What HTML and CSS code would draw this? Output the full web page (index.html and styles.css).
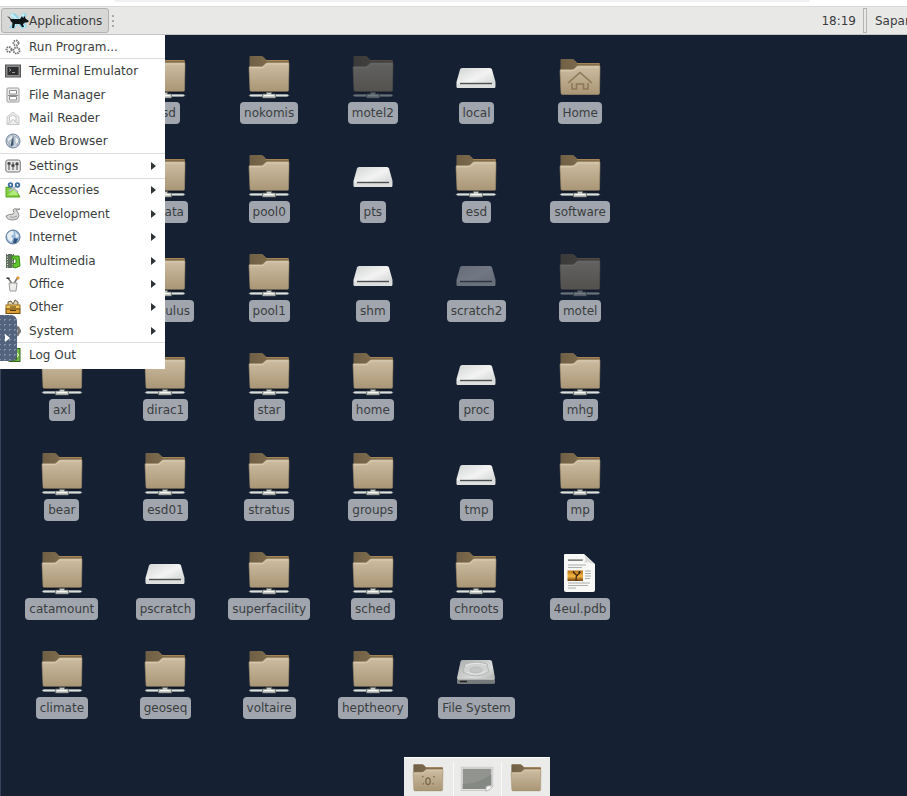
FILE: index.html
```html
<!DOCTYPE html>
<html lang="en">
<head>
<meta charset="utf-8">
<title>Desktop</title>
<link rel="stylesheet" href="styles.css">
</head>
<body>
<svg class="defs" width="0" height="0" aria-hidden="true">
  <defs>
    <linearGradient id="front" x1="0" y1="0" x2="0" y2="1"><stop offset="0" stop-color="#cdbda2"/><stop offset="1" stop-color="#a99675"/></linearGradient>
    <linearGradient id="back" x1="0" y1="0" x2="1" y2="0"><stop offset="0" stop-color="#6f5f45"/><stop offset=".5" stop-color="#7f6c4c"/><stop offset="1" stop-color="#8a6c45"/></linearGradient>
    <linearGradient id="metal" x1="0" y1="0" x2="1" y2="1"><stop offset="0" stop-color="#d2d4d4"/><stop offset=".5" stop-color="#f3f3f3"/><stop offset="1" stop-color="#c8caca"/></linearGradient>
    <linearGradient id="disk" x1="0" y1="0" x2="1" y2="1"><stop offset="0" stop-color="#a9abab"/><stop offset=".6" stop-color="#dcdddd"/><stop offset="1" stop-color="#9fa1a1"/></linearGradient>
    <linearGradient id="sunset" x1="0" y1="0" x2="0" y2="1"><stop offset="0" stop-color="#b87416"/><stop offset=".55" stop-color="#f3b640"/><stop offset="1" stop-color="#714112"/></linearGradient>
  </defs>
  <symbol id="folder" viewBox="0 0 48 48">
    <path d="M4.500 4q0-1 1-1h11q1 0 2 1l3 3h21q1.500 0 1.500 1.500V20H4.500z" fill="url(#back)"/>
    <path d="M21 7.500h22.500" stroke="#a5845a"/>
    <path d="M4 14.500q0-1 1-1h11q1.500 0 2.500-1l2-2q.8-.8 2-.8H43q1 0 1 1L43.500 37q0 1.500-1.500 1.500H6.500Q5 38.500 5 37z" fill="url(#front)" stroke="#a38e6c" stroke-width=".6"/>
    <path d="M5 14.700h11.500q1.500 0 2.500-1l2-2q.8-.8 2-.8h20" fill="none" stroke="#e0d3bd" stroke-width=".8"/>
  </symbol>
  <symbol id="net" viewBox="0 0 48 48">
    <use href="#folder"/>
    <path d="M5 38.800h38l-1 1.700H6z" fill="#0f1724"/>
    <path d="M3.500 42.500L6 41h36l2.500 1.500L42 44H6z" fill="#8d9496"/>
    <path d="M5 42.400h38" stroke="#e4e8e6"/>
    <path d="M21.500 39.500h5v1.500h4v4h-13v-4h4z" fill="#c9cdca" stroke="#5f6461" stroke-width=".7"/>
    <path d="M19 42.500h10" stroke="#f7f7f0"/>
  </symbol>
  <symbol id="home" viewBox="0 0 48 48">
    <g transform="translate(0 3)"><use href="#folder" width="48" height="48"/></g>
    <path d="M12 30l12-10.500L36 30M16 30v6h4.500v-5h7v5H32v-6" fill="none" stroke="#8d7756" stroke-width="1.600"/>
  </symbol>
  <symbol id="drive" viewBox="0 0 48 48">
    <path d="M10 15h28q1.500 0 2 1.500L43.500 29v4.500q0 1.500-1.500 1.500H6q-1.500 0-1.500-1.500V29L8 16.500Q8.500 15 10 15z" fill="url(#metal)"/>
    <path d="M5 30.500h38v3.500q0 1-1 1H6q-1 0-1-1z" fill="#dcdfdd"/>
    <path d="M8 30.500h32" stroke="#4a4e50" stroke-width="1.400"/>
  </symbol>
  <symbol id="harddisk" viewBox="0 0 48 48">
    <path d="M10 12h28q1.500 0 2 1.500L43 30v4q0 1.500-1.500 1.500h-35Q5 35.500 5 34v-4l3.500-16.500Q9 12 10 12z" fill="url(#disk)"/>
    <path d="M13 16q11-4 22 0l2 8q-13 8-26 0z" fill="#d0d2d2" stroke="#aeb0b0" stroke-width=".8"/>
    <ellipse cx="24" cy="22" rx="6" ry="3" fill="#c4c6c6" stroke="#adafaf" stroke-width=".6"/>
    <path d="M14 18q9-5 20-1M14 24q10 5 20-1" fill="none" stroke="#eee" stroke-width=".7"/>
    <path d="M5 30.500h38v3.500q0 1.500-1.500 1.500h-35Q5 35.500 5 34z" fill="#777a7b"/>
    <path d="M6 31h36" stroke="#eee"/><path d="M8 33.500h7" stroke="#222" stroke-width="1.500"/>
  </symbol>
  <symbol id="doc" viewBox="0 0 48 48">
    <g transform="translate(0 3)">
      <path d="M9 2h19l11 10v26q0 2-2 2H10q-2 0-2-2V3q0-1 1-1z" fill="#f8f8f6"/>
      <path d="M28 2q3 6 0 9 6-2 11 2z" fill="#d9dbd8"/>
      <path d="M12 8.500h14M12 13h18M12 15.500h14M29 19h6M29 21.500h6M29 24h6M29 26.500h5M12 31h22M12 33.500h20M12 36h8" stroke="#a0a5a6" stroke-width=".9"/>
      <path d="M12 8h15" stroke="#555"/>
      <rect x="11.500" y="18.500" width="15.500" height="10.500" fill="url(#sunset)"/>
      <path d="M20 29l.4-6-3.400-3M20.500 24l4-4M18 21l-.5-2M23 21.500l.3-2.500" fill="none" stroke="#40240c" stroke-width="1.200"/>
    </g>
  </symbol>
</svg>

<div class="strip"></div>
<header class="panel">
  <button class="apps" type="button">
    <svg width="22" height="18" viewBox="0 0 22 18" aria-hidden="true">
      <path d="M3 1l6 1 3 4 4-5 4 1-4 6 4 7-5 2-4-5-4 5-5-1 5-7z" fill="#8ed4e8"/>
      <path d="M4 2l14 13M17 2L5 16" stroke="#c9f1f9" stroke-width="2"/>
      <path d="M0 4q3 1 4 3h9l2-3 1 2 2-2 .5 2.500L22 9q-1 2-4 1.500L16 12l1 3h-2l-2-3H8l-1 4H5l.5-5Q3 9 3 7z" fill="#101518"/>
    </svg>
    Applications
  </button>
  <span class="grip"><i></i><i></i><i></i></span>
  <time class="clock">18:19</time>
  <span class="divider"></span>
  <span class="user">Sapar</span>
</header>

<main class="desktop">
  <div class="icons">
    <span></span>
    <button class="item"><svg><use href="#net"/></svg><span class="cut">sd</span></button>
    <button class="item"><svg><use href="#net"/></svg><span>nokomis</span></button>
    <button class="item off"><svg><use href="#net"/></svg><span>motel2</span></button>
    <button class="item"><svg><use href="#drive"/></svg><span>local</span></button>
    <button class="item"><svg><use href="#home"/></svg><span>Home</span></button>

    <span></span>
    <button class="item"><svg><use href="#net"/></svg><span class="cut mid">ata</span></button>
    <button class="item"><svg><use href="#net"/></svg><span>pool0</span></button>
    <button class="item"><svg><use href="#drive"/></svg><span>pts</span></button>
    <button class="item"><svg><use href="#net"/></svg><span>esd</span></button>
    <button class="item"><svg><use href="#net"/></svg><span>software</span></button>

    <span></span>
    <button class="item"><svg><use href="#net"/></svg><span class="cut wide">ulus</span></button>
    <button class="item"><svg><use href="#net"/></svg><span>pool1</span></button>
    <button class="item"><svg><use href="#drive"/></svg><span>shm</span></button>
    <button class="item off"><svg><use href="#drive"/></svg><span>scratch2</span></button>
    <button class="item off"><svg><use href="#net"/></svg><span>motel</span></button>

    <button class="item"><svg><use href="#net"/></svg><span>axl</span></button>
    <button class="item"><svg><use href="#net"/></svg><span>dirac1</span></button>
    <button class="item"><svg><use href="#net"/></svg><span>star</span></button>
    <button class="item"><svg><use href="#net"/></svg><span>home</span></button>
    <button class="item"><svg><use href="#drive"/></svg><span>proc</span></button>
    <button class="item"><svg><use href="#net"/></svg><span>mhg</span></button>

    <button class="item"><svg><use href="#net"/></svg><span>bear</span></button>
    <button class="item"><svg><use href="#net"/></svg><span>esd01</span></button>
    <button class="item"><svg><use href="#net"/></svg><span>stratus</span></button>
    <button class="item"><svg><use href="#net"/></svg><span>groups</span></button>
    <button class="item"><svg><use href="#drive"/></svg><span>tmp</span></button>
    <button class="item"><svg><use href="#net"/></svg><span>mp</span></button>

    <button class="item"><svg><use href="#net"/></svg><span>catamount</span></button>
    <button class="item"><svg><use href="#drive"/></svg><span>pscratch</span></button>
    <button class="item"><svg><use href="#net"/></svg><span>superfacility</span></button>
    <button class="item"><svg><use href="#net"/></svg><span>sched</span></button>
    <button class="item"><svg><use href="#net"/></svg><span>chroots</span></button>
    <button class="item"><svg><use href="#doc"/></svg><span>4eul.pdb</span></button>

    <button class="item"><svg><use href="#net"/></svg><span>climate</span></button>
    <button class="item"><svg><use href="#net"/></svg><span>geoseq</span></button>
    <button class="item"><svg><use href="#net"/></svg><span>voltaire</span></button>
    <button class="item"><svg><use href="#net"/></svg><span>heptheory</span></button>
    <button class="item"><svg><use href="#harddisk"/></svg><span>File System</span></button>
  </div>

  <nav class="menu">
    <button><svg viewBox="0 0 16 16"><g fill="none" stroke="#777"><circle cx="11" cy="4" r="2.500" stroke-dasharray="1.500 .8" stroke-width="2"/><circle cx="4" cy="10.500" r="2.500" stroke-dasharray="1.500 .8" stroke-width="2"/><circle cx="11.500" cy="11.500" r="3" stroke-dasharray="1.500 .8" stroke-width="2"/></g></svg>Run Program...</button>
    <hr>
    <button><svg viewBox="0 0 16 16"><rect x=".5" y="2" width="15" height="12" fill="#8c8c8c" stroke="#555"/><rect x="2.500" y="4" width="11" height="8" fill="#2b2d2e"/><path d="M4 5.500l2 1.500-2 1.500M7 9.500h3" fill="none" stroke="#999"/></svg>Terminal Emulator</button>
    <button><svg viewBox="0 0 16 16"><rect x="2" y="1" width="12" height="14" rx="1" fill="#ececec" stroke="#999"/><path d="M4.500 3.500h7v3.500h-7zM4.500 9.500h7V13h-7zM3 8.500h10" fill="#fff" stroke="#8d8d8d"/></svg>File Manager</button>
    <button><svg viewBox="0 0 16 16"><path d="M2 7l6-5 6 5v7.500H2z" fill="#ededed" stroke="#c9c9c9"/><path d="M4.500 11V6.500q3-2.500 6.500 0V11" fill="#fafafa" stroke="#c6c6c6"/><path d="M2.500 14L8 9.500l5.500 4.500" fill="none" stroke="#bbb"/></svg>Mail Reader</button>
    <button><svg viewBox="0 0 16 16"><circle cx="8" cy="8" r="7" fill="#c5d1de" stroke="#71839a"/><path d="M2 7q3-5 6-5l-1 4-3 2 1 5zM10 3l4 4-2 5-2-3z" fill="#eef2f4" stroke="#92a0ae" stroke-width=".7"/><path d="M8.500 3v9l-3 2 1-6z" fill="#40556b"/></svg>Web Browser</button>
    <hr>
    <button class="sub"><svg viewBox="0 0 16 16"><rect x=".8" y="2" width="14.500" height="12" rx="2" fill="#e8e8e8" stroke="#777"/><path d="M4 4v8M8 4v8M12 4v8" stroke="#444"/><path d="M2.500 5.500h3M6.500 7.500h3M10.500 6h3" stroke="#444" stroke-width="2.500"/></svg>Settings</button>
    <hr>
    <button class="sub"><svg viewBox="0 0 16 16"><path d="M1 5l9 2 5 8H1z" fill="#85d144" stroke="#57a423"/><path d="M3 13l7-6 3 6z" fill="#b4ec7d"/><path d="M5 4l8 6M12 4L4 9" stroke="#b5bcc1" stroke-width="2"/><g fill="none" stroke="#3e6d9f" stroke-width="1.800"><circle cx="5.500" cy="3" r="1.800"/><circle cx="12.500" cy="3" r="1.800"/></g></svg>Accessories</button>
    <button class="sub"><svg viewBox="0 0 16 16"><path d="M1 10q3-2 7-2 2-1 0-4Q9 2 12 3l3 0q-2 1-4 1 3 3 3 6-1 4-6 4-6 0-7-4z" fill="#d9dad8" stroke="#8d8f8d"/><path d="M5 11q4 1 7-1" stroke="#9a9a9a" fill="none"/></svg>Development</button>
    <button class="sub"><svg viewBox="0 0 16 16"><circle cx="8" cy="8" r="7" fill="#97b7d9" stroke="#5d7695"/><path d="M2 6q2-4 6-4l1 3-3 2 2 3-2 3Q2 11 2 6zM10 3l4 4-3 2z" fill="#e6eef2"/><path d="M9 9l4 1-2 4-3 0z" fill="#31537c"/></svg>Internet</button>
    <button class="sub"><svg viewBox="0 0 16 16"><rect x="1" y="1" width="8" height="14" fill="#5e6d5c"/><path d="M2.500 1v14M7.500 1v14" stroke="#dfe5dc" stroke-dasharray="1 1.500"/><path d="M7 3h7l1 10-5 2q-3-1-2-4l3-1V6H7z" fill="#62c52f" stroke="#368816"/></svg>Multimedia</button>
    <button class="sub"><svg viewBox="0 0 16 16"><path d="M3 2l5 7M13 1L8 9" stroke="#777" stroke-width="1.500"/><path d="M12 3l2-2" stroke="#db9636" stroke-width="2.500"/><path d="M1.500 2l3 .5" stroke="#333" stroke-width="1.500"/><path d="M4 7h8l-1 8H5z" fill="#ededeb" stroke="#999"/></svg>Office</button>
    <button class="sub"><svg viewBox="0 0 16 16"><path d="M3 7V3l3-1 2 3 2-4 3 2v4" fill="#ddd1b4" stroke="#6e6041"/><rect x="1" y="6" width="14" height="4" fill="#f1c85c" stroke="#9a6e1b"/><rect x="1" y="10" width="14" height="4.500" fill="#dda13a" stroke="#6e4d14"/><path d="M5 11.500h6M5 8h6" stroke="#4d3814"/></svg>Other</button>
    <button class="sub"><svg viewBox="0 0 16 16"><circle cx="10" cy="8" r="4" fill="none" stroke="#777" stroke-width="3"/><circle cx="10" cy="8" r="5.500" fill="none" stroke="#777" stroke-dasharray="2 2"/></svg>System</button>
    <hr>
    <button><svg viewBox="0 0 16 16"><rect x="4" y="1.500" width="11" height="13" fill="#74b84a" stroke="#37641c"/><path d="M8 4l4-1v10l-4 1z" fill="#406b28"/><path d="M11 8h3M12 6l2 2-2 2" stroke="#d8f5b9" fill="none"/></svg>Log Out</button>
  </nav>

  <button class="handle" type="button" aria-label="Open control bar"><svg width="8" height="10" viewBox="0 0 8 10"><path d="M2 1l5 4-5 4z" fill="#fff"/></svg></button>

  <div class="dock">
    <button aria-label="Home folder"><svg viewBox="0 0 48 48"><use href="#folder"/><path d="M22 22q2-1.500 4 0l1 3q0 5-3 5t-3-5zM16 20l2-1M31 19l2 1M17 29h1.500M30 29h1.500" fill="none" stroke="#7d6a4c" stroke-width="1.800"/></svg></button>
    <button aria-label="Show desktop"><svg viewBox="0 0 48 48"><path d="M3 7h42v25l-6 6H3z" fill="#e3e3e2" stroke="#c2c2c0"/><path d="M5 9h38v21l-5 6H5z" fill="#92958f"/><path d="M5 29q17 1 38-12v13l-5 6H5z" fill="#858983"/><path d="M36 39q6-1 9-7-7-1-9 1z" fill="#f5f5f5" stroke="#aaa"/></svg></button>
    <button aria-label="File manager"><svg viewBox="0 0 48 48"><use href="#folder"/></svg></button>
  </div>
</main>
</body>
</html>
```
FILE: styles.css
```css
* { box-sizing: border-box; }

body {
  margin: 0;
  min-height: 100vh;
  display: flex;
  flex-direction: column;
  overflow: hidden;
  background: #152033;
  color: #3a3d3e;
  font: 12px/16px "DejaVu Sans", sans-serif;
}

button {
  margin: 0;
  padding: 0;
  border: 0;
  background: none;
  color: inherit;
  font: inherit;
}

.defs { position: absolute; }

.strip {
  height: 6px;
  background: #fff;
}

.strip::before {
  content: "";
  display: block;
  max-width: 696px;
  height: 2px;
  margin-left: 114px;
  border-radius: 0 0 8px 8px;
  background: #eff0f1;
}

.panel {
  display: flex;
  align-items: center;
  height: 29px;
  padding-left: 1px;
  overflow: hidden;
  background: #e8e8e7;
  border-top: 1px solid #dadada;
  border-bottom: 1px solid #c4c4c4;
}

.apps {
  display: flex;
  align-items: center;
  height: 25px;
  padding: 0 6px 0 5px;
  border: 1px solid #b2b2b2;
  border-radius: 3px;
  background: #d7d7d6;
}

.grip {
  display: grid;
  gap: 3px;
  margin-left: 3px;
}

.grip i {
  width: 2px;
  height: 2px;
  background: #a8a8a8;
}

.clock { margin-left: auto; }

.divider {
  align-self: stretch;
  width: 4px;
  margin: 1px 8px 1px 7px;
  border: 1px solid #b4b4b4;
}

.user {
  width: 32px;
  white-space: nowrap;
}

.desktop {
  position: relative;
  flex: 1;
  padding: 18px 9px;
  border-left: 1px solid #35445a;
}

.icons {
  display: grid;
  grid-template-columns: repeat(6, 1fr);
  grid-template-rows: repeat(7, 1fr);
  max-width: 622px;
  height: 694px;
}

.item {
  display: flex;
  flex-direction: column;
  align-items: center;
  gap: 1px;
  min-width: 0;
}

.item svg {
  width: 48px;
  height: 48px;
}

.item.off svg { opacity: .42; }

.item span {
  padding: 3px 4px;
  border-radius: 4px;
  background: #a1a6ae;
  white-space: nowrap;
}

.item .cut {
  width: 29px;
  text-align: right;
}

.item .mid { width: 45px; }
.item .wide { width: 57px; }

.menu {
  position: absolute;
  top: 0;
  left: -1px;
  display: flex;
  flex-direction: column;
  width: 165px;
  height: 334px;
  padding-bottom: 2px;
  background: #fff;
}

.menu button {
  flex: 1;
  display: flex;
  align-items: center;
  gap: 8px;
  padding: 0 9px 0 5px;
  text-align: left;
}

.menu svg {
  width: 16px;
  height: 16px;
}

.menu .sub::after {
  content: "";
  margin-left: auto;
  border: solid transparent;
  border-width: 4px 0 4px 5px;
  border-left-color: #2e3436;
}

.menu hr {
  width: 100%;
  height: 1px;
  margin: 0;
  border: 0;
  background: #dcdcdc;
}

.handle {
  position: absolute;
  top: 280px;
  left: -1px;
  display: flex;
  align-items: center;
  width: 17px;
  height: 46px;
  padding-left: 3px;
  border-radius: 0 6px 6px 0;
  background: radial-gradient(circle, #8492aa 1px, transparent 1px) 2px 2px / 5px 5px, #53627d;
}

.dock {
  position: absolute;
  bottom: 0;
  left: 403px;
  display: grid;
  grid-template-columns: repeat(3, 1fr);
  width: 146px;
  height: 39px;
  padding: 4px 0;
  background: #ebebea;
  border-top: 1px solid #fff;
}

.dock button {
  display: flex;
  align-items: center;
  justify-content: center;
}

.dock button + button { border-left: 1px solid #f8f8f8; }

.dock svg {
  width: 36px;
  height: 36px;
}
```
